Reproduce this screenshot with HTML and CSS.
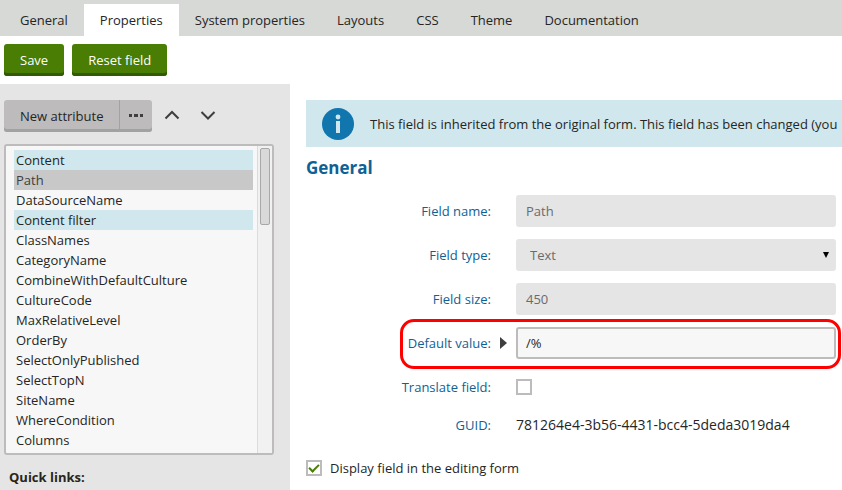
FILE: index.html
```html
<!DOCTYPE html>
<html lang="en">
<head>
<meta charset="utf-8">
<meta name="viewport" content="width=device-width, initial-scale=1">
<title>Field properties</title>
<link rel="stylesheet" href="styles.css">
</head>
<body>
<nav class="tabs">
  <a class="tab" href="#general">General</a>
  <a class="tab tab-active" href="#properties" aria-current="page">Properties</a>
  <a class="tab" href="#system">System properties</a>
  <a class="tab" href="#layouts">Layouts</a>
  <a class="tab" href="#css">CSS</a>
  <a class="tab" href="#theme">Theme</a>
  <a class="tab" href="#documentation">Documentation</a>
</nav>
<div class="actions">
  <button class="btn btn-primary" type="button">Save</button>
  <button class="btn btn-primary" type="button">Reset field</button>
</div>
<div class="columns">
  <aside class="sidebar">
    <div class="toolbar">
      <div class="btn-group">
        <button class="btn btn-default" type="button">New attribute</button>
        <button class="btn btn-default btn-more" type="button" aria-label="More">
          <svg width="16" height="16" viewBox="0 0 16 16" fill="#403e3d"><path d="M1 6h3v3H1zM6 6h4v3H6zM12 6h3v3h-3z"/></svg>
        </button>
      </div>
      <button class="btn-icon" type="button" aria-label="Move up">
        <svg width="16" height="16" viewBox="0 0 16 16" fill="none" stroke="#403e3d" stroke-width="2"><path d="M1.500 10.500 8 4l6.500 6.500"/></svg>
      </button>
      <button class="btn-icon" type="button" aria-label="Move down">
        <svg width="16" height="16" viewBox="0 0 16 16" fill="none" stroke="#403e3d" stroke-width="2"><path d="M1.500 4 8 10.500 14.500 4"/></svg>
      </button>
    </div>
    <div class="listbox">
      <select class="list" size="15" aria-label="Fields">
        <option class="category">Content</option>
        <option class="current">Path</option>
        <option>DataSourceName</option>
        <option class="category">Content filter</option>
        <option>ClassNames</option>
        <option>CategoryName</option>
        <option>CombineWithDefaultCulture</option>
        <option>CultureCode</option>
        <option>MaxRelativeLevel</option>
        <option>OrderBy</option>
        <option>SelectOnlyPublished</option>
        <option>SelectTopN</option>
        <option>SiteName</option>
        <option>WhereCondition</option>
        <option>Columns</option>
      </select>
      <div class="track"><div class="thumb"></div></div>
    </div>
    <h2 class="quick">Quick links:</h2>
  </aside>
  <main class="content">
    <div class="banner">
      <svg class="banner-icon" width="32" height="32" viewBox="0 0 32 32"><circle cx="16" cy="16" r="16" fill="#1175ae"/><circle cx="16" cy="9" r="2.400" fill="#d0e7ed"/><path d="M14 13h4v12h-4z" fill="#d0e7ed"/></svg>
      <span>This field is inherited from the original form. This field has been changed (you</span>
    </div>
    <h1 class="heading">General</h1>
    <form class="form">
      <div class="row">
        <label class="label" for="name">Field name:</label>
        <input class="control" id="name" type="text" value="Path" disabled>
      </div>
      <div class="row">
        <label class="label" for="type">Field type:</label>
        <div class="select-wrap">
          <select class="control control-select" id="type" disabled><option>Text</option></select>
          <svg class="caret" width="6" height="6" viewBox="0 0 6 6"><path d="M0 0h6L3 6z"/></svg>
        </div>
      </div>
      <div class="row">
        <label class="label" for="size">Field size:</label>
        <input class="control" id="size" type="text" value="450" disabled>
      </div>
      <div class="row row-marked">
        <label class="label" for="default">Default value:</label>
        <svg class="expand" width="7" height="12" viewBox="0 0 7 12"><path d="M0 0 7 6 0 12z" fill="#403e3d"/></svg>
        <input class="control" id="default" type="text" value="/%">
      </div>
      <div class="row">
        <label class="label" for="translate">Translate field:</label>
        <input class="check" id="translate" type="checkbox">
      </div>
      <div class="row row-text">
        <span class="label">GUID:</span>
        <span class="value">781264e4-3b56-4431-bcc4-5deda3019da4</span>
      </div>
      <div class="display">
        <input class="check" id="display" type="checkbox" checked>
        <label for="display">Display field in the editing form</label>
      </div>
    </form>
  </main>
</div>
</body>
</html>
```
FILE: styles.css
```css
* { box-sizing: border-box; }

body {
  margin: 0;
  min-height: 100vh;
  display: flex;
  flex-direction: column;
  background: #fff;
  color: #262524;
  font: 13px/20px "Open Sans", "Noto Sans", sans-serif;
}

button, input, select { font: inherit; color: inherit; margin: 0; }
svg { display: block; }

.tabs {
  display: flex;
  padding: 4px 4px 0;
  background: #d6d9d6;
}
.tab {
  padding: 6px 16px;
  color: inherit;
  text-decoration: none;
  white-space: nowrap;
}
.tab-active { background: #fff; }

.actions { display: flex; gap: 8px; padding: 8px 4px; }

.btn {
  height: 32px;
  padding: 0 16px;
  border: 0;
  border-radius: 3px;
  white-space: nowrap;
}
.btn-primary {
  background: #497d04;
  color: #fff;
  font-weight: 500;
  box-shadow: inset 0 -3px #325903;
}
.btn-default { background: #bdbbbb; box-shadow: inset 0 -3px #a3a2a2; }

.columns { display: flex; flex: 1; }

.sidebar {
  flex: 0 0 290px;
  padding: 16px 16px 0 4px;
  background: #e5e5e5;
}
.toolbar { display: flex; align-items: flex-start; gap: 4px; }
.btn-group { display: flex; }
.btn-group .btn:first-child { border-radius: 3px 0 0 3px; }
.btn-group .btn-more {
  padding: 0 8px;
  border-left: 1px solid #a3a2a2;
  border-radius: 0 3px 3px 0;
}
.btn-icon {
  display: grid;
  place-items: center;
  width: 32px;
  height: 32px;
  padding: 0;
  border: 0;
  background: none;
}

.listbox {
  display: flex;
  margin-top: 12px;
  border: 2px solid #bdbbbb;
  border-radius: 3px;
  background: #f7f7f7;
}
.list {
  flex: 1;
  min-width: 0;
  height: 307px;
  padding: 4px 4px 3px 8px;
  border: 0;
  outline: 0;
  background: none;
  scrollbar-width: none;
}
.list option { height: 20px; padding: 1px 2px 0; line-height: 18px; }
.category { background: #d0e7ed; }
.current { background: #c8c8c8; color: #403e3d; }
.track {
  flex: 0 0 15px;
  padding: 2px;
  border-left: 1px solid #dcdcdc;
  background: #f1f1f1;
}
.thumb {
  height: 77px;
  border: 1px solid #a8a8a8;
  border-radius: 2px;
  background: #d9d9d9;
}
.quick { margin: 12px 5px; font-size: 13px; font-weight: 700; line-height: 20px; }

.content { flex: 1; min-width: 0; padding: 16px 0 0 16px; }
.banner {
  display: flex;
  align-items: center;
  gap: 16px;
  height: 47px;
  padding: 0 0 0 16px;
  overflow: hidden;
  background: #d0e7ed;
  white-space: nowrap;
}
.banner-icon { flex: none; }
.heading {
  margin: 9px 0 15px;
  color: #0f6194;
  font-size: 17px;
  font-weight: 700;
  line-height: 24px;
}

.form { display: grid; gap: 12px; padding-right: 6px; }
.row {
  display: grid;
  grid-template-columns: 185px 25px 1fr;
  align-items: center;
  min-height: 32px;
}
.row-text { min-height: 20px; }
.label { color: #0f6194; text-align: right; }
.value { font-size: 14px; }
.row > :last-child { grid-column: 3; }

.control {
  display: block;
  width: 100%;
  height: 32px;
  padding: 0 8px;
  border: 2px solid #bdbbbb;
  border-radius: 3px;
  background: #f7f7f7;
  appearance: none;
}
.control:disabled {
  border-color: #e5e5e5;
  background: #e5e5e5;
  color: #6b6b6b;
  opacity: 1;
}
.select-wrap { position: relative; }
.control-select { padding: 0 12px; }
.caret { position: absolute; top: 13px; right: 7px; }
.expand { justify-self: center; }

.row-marked { position: relative; }
.row-marked::after {
  content: "";
  position: absolute;
  inset: -8px -5px -10px 94px;
  border: 3px solid #f00;
  border-radius: 14px;
  pointer-events: none;
}

.check {
  display: grid;
  place-items: center;
  width: 16px;
  height: 16px;
  border: 2px solid #bdbbbb;
  background: #fff;
  appearance: none;
}
.check:checked::before {
  content: "";
  width: 8px;
  height: 4px;
  margin-bottom: 2px;
  border: solid #497d04;
  border-width: 0 0 2px 2px;
  transform: rotate(-45deg);
}
.display { display: flex; align-items: center; gap: 8px; margin-top: 11px; }
```
